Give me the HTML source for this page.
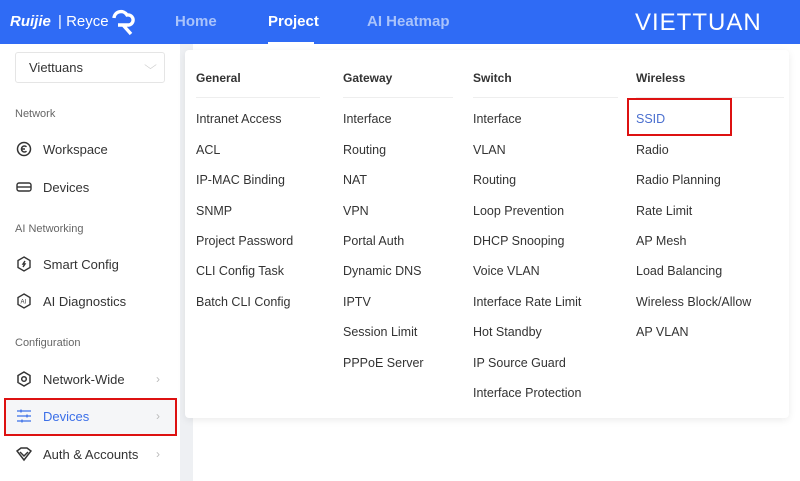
<!DOCTYPE html>
<html><head><meta charset="utf-8"><style>
*{margin:0;padding:0;box-sizing:border-box}
body{width:800px;height:481px;overflow:hidden;background:#fff;font-family:"Liberation Sans",Arial,sans-serif;position:relative}
.hdr{position:absolute;left:0;top:0;width:800px;height:44px;background:#2f6bf5}
.t{position:absolute;white-space:nowrap}
.nav{color:#a9c3fb;font-size:15px;font-weight:bold;top:13px}
.side{position:absolute;left:0;top:44px;width:180px;height:437px;background:#fff}
.strip{position:absolute;left:180px;top:44px;width:13px;height:437px;background:#eef0f3}
.sec{color:#666;font-size:11px;left:15px}
.si{color:#333;font-size:13px;left:43px}
.ic{position:absolute;left:16px;width:16px;height:16px}
.chev{color:#bbb;font-size:12px;left:156px}
.panel{position:absolute;left:185px;top:50px;width:604px;height:368px;background:#fff;border-radius:4px;box-shadow:0 2px 8px rgba(0,0,0,.08)}
.h{font-size:12px;font-weight:bold;color:#333;top:71px}
.i{font-size:12.5px;color:#333}
.line{position:absolute;top:97px;height:1px;background:#eee}
</style></head><body>
<div class="hdr"></div>
<div class="t" style="left:10px;top:13px;color:#fff;font-size:15px;font-style:italic;font-weight:bold">Ruijie</div>
<div class="t" style="left:58px;top:13px;color:#fff;font-size:15px">| Reyce</div>
<svg style="position:absolute;left:112px;top:9px" width="24" height="28" viewBox="0 0 24 28" fill="none" stroke="#fff" stroke-width="3.4"><path d="M2 9a7 7 0 0 1 13-3 5 5 0 0 1 2 10H6M11 16l8 9"/></svg>
<div class="t nav" style="left:175px">Home</div>
<div class="t nav" style="left:268px;color:#fff">Project</div>
<div style="position:absolute;left:268px;top:42px;width:46px;height:2px;background:#fff"></div>
<div class="t nav" style="left:367px">AI Heatmap</div>
<div class="t" style="left:635px;top:9px;color:#fff;font-size:24px;letter-spacing:1px">VIETTUAN</div>

<div class="side"></div>
<div class="strip"></div>
<div style="position:absolute;left:15px;top:52px;width:150px;height:31px;border:1px solid #e5e5e5;border-radius:3px"></div>
<div class="t" style="left:29px;top:60px;font-size:13px;color:#333">Viettuans</div>
<div class="t" style="left:146px;top:58px;color:#ccc;font-size:12px;transform:scaleX(1.4)">⌵</div>
<div class="t sec" style="top:108px">Network</div>
<svg class="ic" style="top:141px" viewBox="0 0 16 16" fill="none" stroke="#333" stroke-width="1.5"><circle cx="8" cy="8" r="6.5"/><path d="M10.5 5.8a3 3 0 1 0 0 4.4M6 8h3"/></svg>
<div class="t si" style="top:142px">Workspace</div>
<svg class="ic" style="top:179px" viewBox="0 0 16 16" fill="none" stroke="#333" stroke-width="1.4"><rect x="1" y="4" width="14" height="8" rx="2"/><path d="M1 8h14"/></svg>
<div class="t si" style="top:180px">Devices</div>
<div class="t sec" style="top:223px">AI Networking</div>
<svg class="ic" style="top:256px" viewBox="0 0 16 16" fill="none" stroke="#333" stroke-width="1.4"><path d="M8 1l6 3.5v7L8 15l-6-3.5v-7z"/><path d="M9 5l-2 3h2l-2 3"/></svg>
<div class="t si" style="top:257px">Smart Config</div>
<svg class="ic" style="top:293px" viewBox="0 0 16 16" fill="none" stroke="#333" stroke-width="1.4"><path d="M8 1l6 3.5v7L8 15l-6-3.5v-7z"/><text x="4.5" y="10.5" font-size="6" fill="#333" stroke="none" font-family="Liberation Sans">AI</text></svg>
<div class="t si" style="top:294px">AI Diagnostics</div>
<div class="t sec" style="top:337px">Configuration</div>
<svg class="ic" style="top:371px" viewBox="0 0 16 16" fill="none" stroke="#333" stroke-width="1.5"><path d="M8 1l6 3.5v7L8 15l-6-3.5v-7z"/><circle cx="8" cy="8" r="2.3"/></svg>
<div class="t si" style="top:372px">Network-Wide</div>
<div class="t chev" style="top:372px">›</div>
<div style="position:absolute;left:4px;top:398px;width:173px;height:38px;border:2px solid #d11;background:#f5f6f8"></div>
<svg class="ic" style="top:408px" viewBox="0 0 16 16" fill="none" stroke="#3b6fe8" stroke-width="1.3"><path d="M1 3h14M1 8h14M1 13h14M5 1.5v3M11 6.5v3M6 11.5v3"/></svg>
<div class="t si" style="top:409px;color:#3b6fe8">Devices</div>
<div class="t chev" style="top:409px">›</div>
<svg class="ic" style="top:446px" viewBox="0 0 16 16" fill="none" stroke="#333" stroke-width="1.5"><path d="M1 5l4-3h6l4 3-7 9z"/><path d="M4 6l4 4 4-4"/></svg>
<div class="t si" style="top:447px">Auth &amp; Accounts</div>
<div class="t chev" style="top:447px">›</div>

<div class="panel"></div>
<div class="line" style="left:196px;width:124px"></div>
<div class="line" style="left:343px;width:110px"></div>
<div class="line" style="left:473px;width:145px"></div>
<div class="line" style="left:636px;width:148px"></div>
<div class="t h" style="left:196px">General</div>
<div class="t h" style="left:343px">Gateway</div>
<div class="t h" style="left:473px">Switch</div>
<div class="t h" style="left:636px">Wireless</div>

<div class="t i" style="left:196px;top:112px">Intranet Access</div>
<div class="t i" style="left:196px;top:143px">ACL</div>
<div class="t i" style="left:196px;top:173px">IP-MAC Binding</div>
<div class="t i" style="left:196px;top:204px">SNMP</div>
<div class="t i" style="left:196px;top:234px">Project Password</div>
<div class="t i" style="left:196px;top:264px">CLI Config Task</div>
<div class="t i" style="left:196px;top:295px">Batch CLI Config</div>

<div class="t i" style="left:343px;top:112px">Interface</div>
<div class="t i" style="left:343px;top:143px">Routing</div>
<div class="t i" style="left:343px;top:173px">NAT</div>
<div class="t i" style="left:343px;top:204px">VPN</div>
<div class="t i" style="left:343px;top:234px">Portal Auth</div>
<div class="t i" style="left:343px;top:264px">Dynamic DNS</div>
<div class="t i" style="left:343px;top:295px">IPTV</div>
<div class="t i" style="left:343px;top:325px">Session Limit</div>
<div class="t i" style="left:343px;top:356px">PPPoE Server</div>

<div class="t i" style="left:473px;top:112px">Interface</div>
<div class="t i" style="left:473px;top:143px">VLAN</div>
<div class="t i" style="left:473px;top:173px">Routing</div>
<div class="t i" style="left:473px;top:204px">Loop Prevention</div>
<div class="t i" style="left:473px;top:234px">DHCP Snooping</div>
<div class="t i" style="left:473px;top:264px">Voice VLAN</div>
<div class="t i" style="left:473px;top:295px">Interface Rate Limit</div>
<div class="t i" style="left:473px;top:325px">Hot Standby</div>
<div class="t i" style="left:473px;top:356px">IP Source Guard</div>
<div class="t i" style="left:473px;top:386px">Interface Protection</div>

<div style="position:absolute;left:627px;top:98px;width:105px;height:38px;border:2px solid #d11"></div>
<div class="t i" style="left:636px;top:112px;color:#4a6fcf">SSID</div>
<div class="t i" style="left:636px;top:143px">Radio</div>
<div class="t i" style="left:636px;top:173px">Radio Planning</div>
<div class="t i" style="left:636px;top:204px">Rate Limit</div>
<div class="t i" style="left:636px;top:234px">AP Mesh</div>
<div class="t i" style="left:636px;top:264px">Load Balancing</div>
<div class="t i" style="left:636px;top:295px">Wireless Block/Allow</div>
<div class="t i" style="left:636px;top:325px">AP VLAN</div>
</body></html>
